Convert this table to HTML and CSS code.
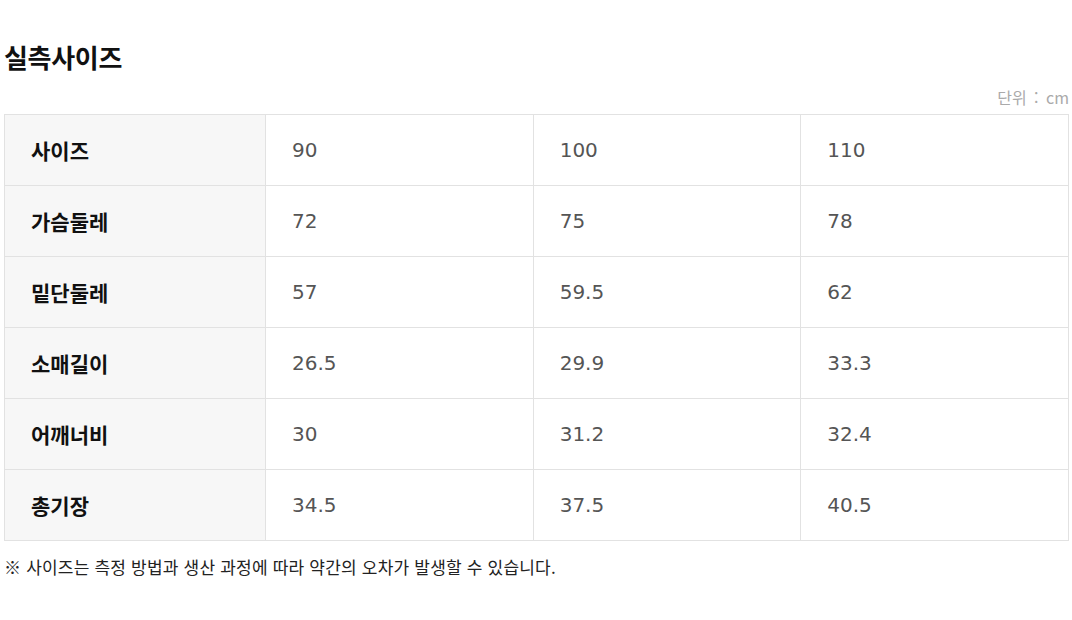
FILE: index.html
```html
<!DOCTYPE html>
<html lang="ko">
<head>
<meta charset="utf-8">
<link rel="stylesheet" href="styles.css">
</head>
<body>
<div class="wrap">
  <h2 class="title">실측사이즈</h2>
  <div class="unit">단위 : cm</div>
  <table class="size">
    <colgroup><col class="c0"><col><col><col></colgroup>
    <tr><th>사이즈</th><td>90</td><td>100</td><td>110</td></tr>
    <tr><th>가슴둘레</th><td>72</td><td>75</td><td>78</td></tr>
    <tr><th>밑단둘레</th><td>57</td><td>59.5</td><td>62</td></tr>
    <tr><th>소매길이</th><td>26.5</td><td>29.9</td><td>33.3</td></tr>
    <tr><th>어깨너비</th><td>30</td><td>31.2</td><td>32.4</td></tr>
    <tr><th>총기장</th><td>34.5</td><td>37.5</td><td>40.5</td></tr>
  </table>
  <p class="note">※ 사이즈는 측정 방법과 생산 과정에 따라 약간의 오차가 발생할 수 있습니다.</p>
</div>
</body>
</html>
```
FILE: styles.css
```css
html, body { margin: 0; padding: 0; background: #fff; }
body { font-family: "Noto Sans CJK KR", "Noto Sans", sans-serif; color: #111; }
.wrap { width: 1065px; padding: 40px 0 0 4px; }
.title { margin: 0; font-size: 26px; font-weight: 700; line-height: 34px; color: #111; letter-spacing: -0.3px; }
.unit { text-align: right; font-size: 16px; color: #aaa; line-height: 20px; margin-top: 13px; height: 27px; word-spacing: 3px; }
.size { width: 1065px; border-collapse: collapse; table-layout: fixed; border: 1px solid #e2e2e2; }
.size col.c0 { width: 261px; }
.size th, .size td { height: 70px; border: 1px solid #e2e2e2; padding: 0 0 0 26px; text-align: left; line-height: 24px; }
.size th { background: #f7f7f7; font-weight: 700; color: #111; font-size: 21px; }
.size td { color: #555; font-weight: 400; font-family: "DejaVu Sans", "Noto Sans CJK KR", sans-serif; font-size: 20px; }
.note { margin: 14px 0 0; font-size: 17px; color: #222; line-height: 24px; letter-spacing: 0.2px; }
```
